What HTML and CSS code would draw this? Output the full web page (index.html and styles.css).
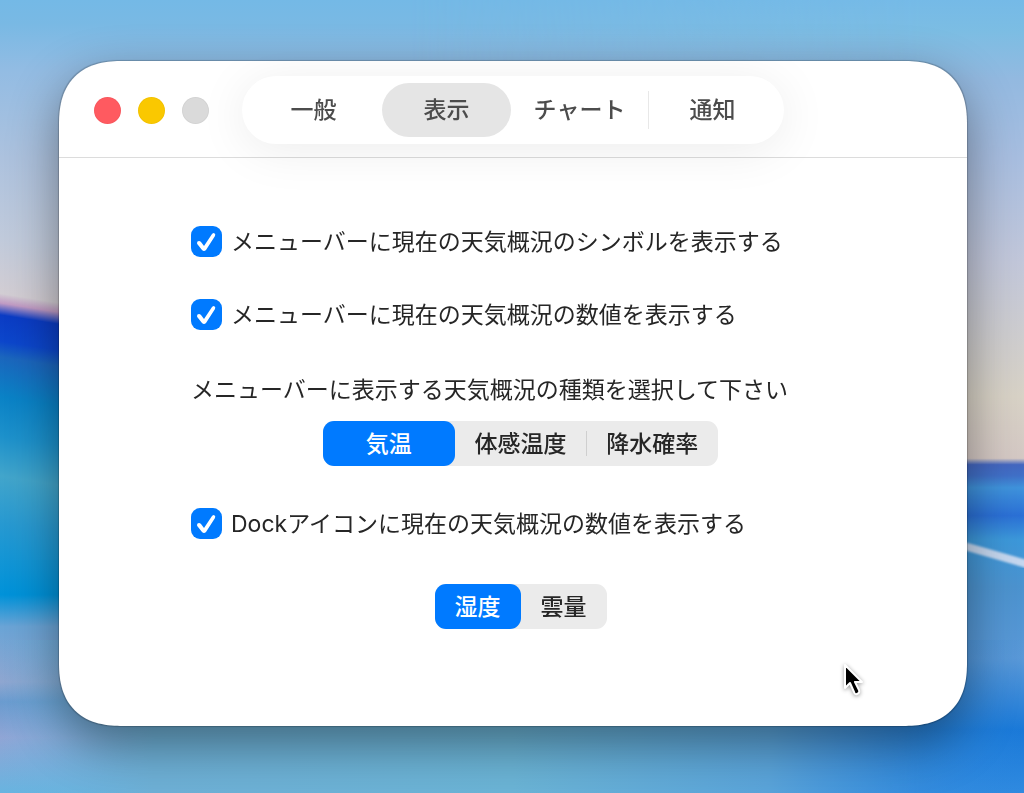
FILE: index.html
```html
<!DOCTYPE html>
<html lang="ja">
<head>
    <meta charset="UTF-8">
    <meta name="viewport" content="width=device-width, initial-scale=1">
    <title>表示</title>
    <link rel="stylesheet" href="styles.css">
</head>
<body>
    <svg class="wallpaper" viewBox="0 0 1024 793" preserveAspectRatio="none" aria-hidden="true">
        <defs>
            <linearGradient id="west" gradientUnits="userSpaceOnUse" x1="0" y1="0" x2="0" y2="793">
                <stop offset="0" stop-color="#74b9e6"/>
                <stop offset=".03" stop-color="#79b9e4"/>
                <stop offset=".09" stop-color="#93bce3"/>
                <stop offset=".2" stop-color="#adc2de"/>
                <stop offset=".3" stop-color="#c0cadb"/>
                <stop offset=".37" stop-color="#d2cdd3"/>
                <stop offset=".382" stop-color="#c09bc4"/>
                <stop offset=".397" stop-color="#0b3cc4"/>
                <stop offset=".43" stop-color="#0c46cb"/>
                <stop offset=".45" stop-color="#1b66bd"/>
                <stop offset=".5" stop-color="#0a82c6"/>
                <stop offset=".55" stop-color="#1d91cb"/>
                <stop offset=".6" stop-color="#42a5cb"/>
                <stop offset=".66" stop-color="#2799d1"/>
                <stop offset=".75" stop-color="#0092d9"/>
                <stop offset=".79" stop-color="#6aa4d6"/>
                <stop offset=".86" stop-color="#8fa6d0"/>
                <stop offset=".885" stop-color="#6a9bcf"/>
                <stop offset=".93" stop-color="#90a5d5"/>
                <stop offset="1" stop-color="#68b4e0"/>
            </linearGradient>
            <linearGradient id="east" gradientUnits="userSpaceOnUse" x1="0" y1="0" x2="0" y2="793">
                <stop offset="0" stop-color="#75bae7"/>
                <stop offset=".04" stop-color="#7cbde3"/>
                <stop offset=".1" stop-color="#93b9e0"/>
                <stop offset=".2" stop-color="#a8bee0"/>
                <stop offset=".33" stop-color="#c2c7da"/>
                <stop offset=".5" stop-color="#d8d2c6"/>
                <stop offset=".578" stop-color="#d4c8c4"/>
                <stop offset=".586" stop-color="#4467c0"/>
                <stop offset=".6" stop-color="#4070c8"/>
                <stop offset=".615" stop-color="#3f93dc"/>
                <stop offset=".65" stop-color="#2b70d6"/>
                <stop offset=".68" stop-color="#3c98da"/>
                <stop offset=".74" stop-color="#4c93cf"/>
                <stop offset=".83" stop-color="#5a99d8"/>
                <stop offset=".92" stop-color="#1a79d8"/>
                <stop offset="1" stop-color="#2f8ae0"/>
            </linearGradient>
            <linearGradient id="south">
                <stop offset="0" stop-color="#68b4e0" stop-opacity="0"/>
                <stop offset=".15" stop-color="#6eb0d6"/>
                <stop offset=".5" stop-color="#6bb4d6"/>
                <stop offset=".75" stop-color="#5aa4da"/>
                <stop offset="1" stop-color="#2a83da" stop-opacity="0"/>
            </linearGradient>
            <linearGradient id="fade">
                <stop offset=".4" stop-color="#000"/>
                <stop offset=".9" stop-color="#fff"/>
            </linearGradient>
            <mask id="right-side">
                <rect width="1024" height="793" fill="url(#fade)"/>
            </mask>
            <filter id="soft">
                <feGaussianBlur stdDeviation="1"/>
            </filter>
        </defs>
        <rect y="-200" width="1024" height="1200" fill="url(#west)" transform="skewY(9)"/>
        <rect width="1024" height="240" fill="url(#west)"/>
        <rect y="560" width="1024" height="233" fill="url(#west)"/>
        <g mask="url(#right-side)">
            <rect width="1024" height="793" fill="url(#east)"/>
        </g>
        <rect y="640" width="1024" height="153" fill="url(#south)"/>
        <path d="M940 539 L1030 565" stroke="#c5d7ef" stroke-width="8" filter="url(#soft)"/>
    </svg>

    <div class="window">
        <header class="toolbar">
            <div class="lights">
                <button class="light close" aria-label="閉じる"></button>
                <button class="light minimize" aria-label="しまう"></button>
                <button class="light zoom" aria-label="拡大" disabled></button>
            </div>
            <nav class="tabs">
                <button class="tab">一般</button>
                <button class="tab active">表示</button>
                <button class="tab">チャート</button>
                <button class="tab divided">通知</button>
            </nav>
        </header>

        <main class="settings">
            <div class="option">
                <input type="checkbox" id="symbol" class="check" checked>
                <label for="symbol">メニューバーに現在の天気概況のシンボルを表示する</label>
            </div>
            <div class="option">
                <input type="checkbox" id="value" class="check" checked>
                <label for="value">メニューバーに現在の天気概況の数値を表示する</label>
            </div>
            <fieldset class="group">
                <legend class="caption">メニューバーに表示する天気概況の種類を選択して下さい</legend>
                <div class="segments">
                    <label class="segment"><input type="radio" name="menubar" checked><span>気温</span></label>
                    <label class="segment"><input type="radio" name="menubar"><span>体感温度</span></label>
                    <label class="segment divided"><input type="radio" name="menubar"><span>降水確率</span></label>
                </div>
            </fieldset>
            <div class="option">
                <input type="checkbox" id="dock" class="check" checked>
                <label for="dock">Dockアイコンに現在の天気概況の数値を表示する</label>
            </div>
            <div class="segments small">
                <label class="segment"><input type="radio" name="dock" checked><span>湿度</span></label>
                <label class="segment"><input type="radio" name="dock"><span>雲量</span></label>
            </div>
        </main>

        <svg class="cursor" viewBox="0 0 24 36" aria-hidden="true">
            <path d="M3 3 L3 26 L8 21 L12 30 Q13 33 15 32 Q18 31 17 28 L13 20 L20 20 Z"
                fill="#000" stroke="#fff" stroke-width="2" stroke-linejoin="round"/>
        </svg>
    </div>
</body>
</html>
```
FILE: styles.css
```css
* {
    box-sizing: border-box;
}
body {
    margin: 0;
    min-height: 100vh;
    padding: 61px 57px 67px 59px;
    display: flex;
    font-family: Inter, "Noto Sans CJK JP", sans-serif;
    font-size: 23px;
    line-height: 30px;
    color: #262626;
}
button {
    border: 0;
    padding: 0;
    font: inherit;
}
.wallpaper {
    position: fixed;
    top: 0;
    left: 0;
    width: 100%;
    height: 100%;
    z-index: -1;
}

.window {
    position: relative;
    flex: 1;
    background: #fff;
    border-radius: 64px;
    corner-shape: superellipse(1.3);
    box-shadow: 0 0 1px 1px rgba(0, 0, 0, 0.2), 0 18px 50px rgba(0, 0, 0, 0.42);
}

/* toolbar */
.toolbar {
    display: flex;
    align-items: center;
    padding: 15px 35px 13px;
    border-bottom: 1px solid #dcdcdc;
}
.lights {
    display: flex;
    gap: 17px;
    margin-right: 33px;
}
.light {
    width: 27px;
    height: 27px;
    border-radius: 50%;
    box-shadow: inset 0 0 0 1px rgba(0, 0, 0, 0.03);
}
.close {
    background: #ff5a60;
}
.minimize {
    background: #fac800;
}
.zoom {
    background: #dadada;
}
.tabs {
    display: grid;
    grid-template-columns: repeat(4, 1fr);
    gap: 4px;
    width: 542px;
    height: 68px;
    padding: 7px;
    background: #fff;
    border-radius: 34px;
    box-shadow: 0 6px 50px rgba(0, 0, 0, 0.08);
}
.tab {
    position: relative;
    background: none;
    border-radius: 27px;
    font-weight: 500;
    color: #4c4c4c;
}
.tab.active {
    background: #e5e5e5;
}
.tab.divided::before {
    content: "";
    position: absolute;
    left: 0;
    top: 8px;
    bottom: 8px;
    width: 1px;
    background: #e8e8e8;
}

/* settings */
.settings {
    padding: 68px 117px 97px 132px;
}
.option {
    display: flex;
    align-items: center;
    gap: 9px;
    height: 31px;
    margin-bottom: 42px;
}
.check {
    appearance: none;
    flex: none;
    display: grid;
    place-items: center;
    width: 31px;
    height: 31px;
    margin: 0;
    border-radius: 9px;
    background: #e4e4e4;
}
.check:checked {
    background: #007aff;
}
.check:checked::before {
    content: "";
    width: 31px;
    height: 31px;
    background: #fff;
    clip-path: path("M6 17 Q6 15 8 15 Q9 15 10 16 L13 20 L21 8 Q22 7 23 7 Q25 8 24 10 L15 24 Q13 26 11 24 L7 19 Q6 18 6 17 Z");
}
.group {
    border: 0;
    margin: 0 0 42px;
    padding: 0;
    min-width: 0;
}
.caption {
    padding: 3px 0 16px;
}
.segments {
    display: grid;
    grid-auto-flow: column;
    grid-auto-columns: 1fr;
    width: 395px;
    height: 45px;
    margin: 0 auto;
    background: #ebebeb;
    border-radius: 11px;
}
.segments.small {
    width: 172px;
    margin-top: 45px;
}
.segment {
    position: relative;
    display: flex;
    font-weight: 500;
}
.segment input {
    appearance: none;
    position: absolute;
    margin: 0;
}
.segment span {
    flex: 1;
    display: flex;
    align-items: center;
    justify-content: center;
    border-radius: 11px;
}
.segment input:checked + span {
    background: #007aff;
    color: #fff;
}
.segment.divided::before {
    content: "";
    position: absolute;
    left: 0;
    top: 10px;
    bottom: 10px;
    width: 1px;
    background: #cfcfcf;
}

.cursor {
    position: absolute;
    right: 101px;
    bottom: 28px;
    width: 24px;
    height: 36px;
    filter: drop-shadow(0 1px 2px rgba(0, 0, 0, 0.4));
}
```
